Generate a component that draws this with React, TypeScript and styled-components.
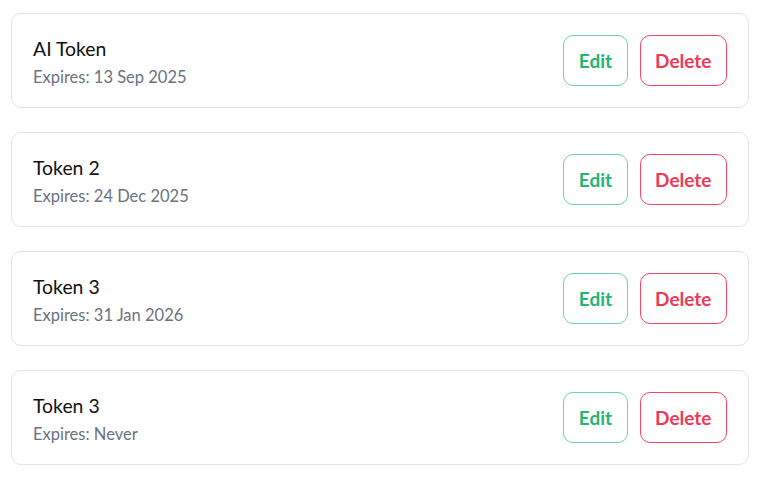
import React from "react";
import styled, { createGlobalStyle } from "styled-components";

const Global = createGlobalStyle`
  html, body { margin: 0; padding: 0; background: #ffffff; }
  body { font-family: Lato, "Noto Sans", sans-serif; }
`;

const List = styled.div`
  display: flex;
  flex-direction: column;
  gap: 24px;
  padding: 13px 20px 0 11px;
`;

const Card = styled.div`
  box-sizing: border-box;
  height: 95px;
  display: flex;
  align-items: center;
  justify-content: space-between;
  padding: 0 21px;
  border: 1px solid #e3e4e8;
  border-radius: 10px;
  background: #fff;
`;

const Info = styled.div`
  display: flex;
  flex-direction: column;
  gap: 6px;
  padding-top: 3px;
`;

const Title = styled.div`
  font-size: 19.4px;
  color: #111;
  line-height: 24px;
`;

const Sub = styled.div`
  font-size: 16.5px;
  color: #6b7280;
  line-height: 20px;
`;

const Actions = styled.div`
  display: flex;
  gap: 12px;
`;

const Button = styled.button<{ $tone: "green" | "red" }>`
  height: 51px;
  padding: 0 14.5px;
  border-radius: 10px;
  background: #fff;
  font-family: Lato, "Noto Sans", sans-serif;
  font-weight: 700;
  font-size: 19px;
  border: 1px solid ${(p) => (p.$tone === "green" ? "#6ed3a4" : "#f04860")};
  color: ${(p) => (p.$tone === "green" ? "#22b573" : "#ee3a55")};
  cursor: pointer;
`;

const tokens = [
  { name: "AI Token", expires: "13 Sep 2025" },
  { name: "Token 2", expires: "24 Dec 2025" },
  { name: "Token 3", expires: "31 Jan 2026" },
  { name: "Token 3", expires: "Never" },
];

export default function App() {
  return (
    <>
      <Global />
      <List>
        {tokens.map((t, i) => (
          <Card key={i}>
            <Info>
              <Title>{t.name}</Title>
              <Sub>Expires: {t.expires}</Sub>
            </Info>
            <Actions>
              <Button $tone="green">Edit</Button>
              <Button $tone="red">Delete</Button>
            </Actions>
          </Card>
        ))}
      </List>
    </>
  );
}
